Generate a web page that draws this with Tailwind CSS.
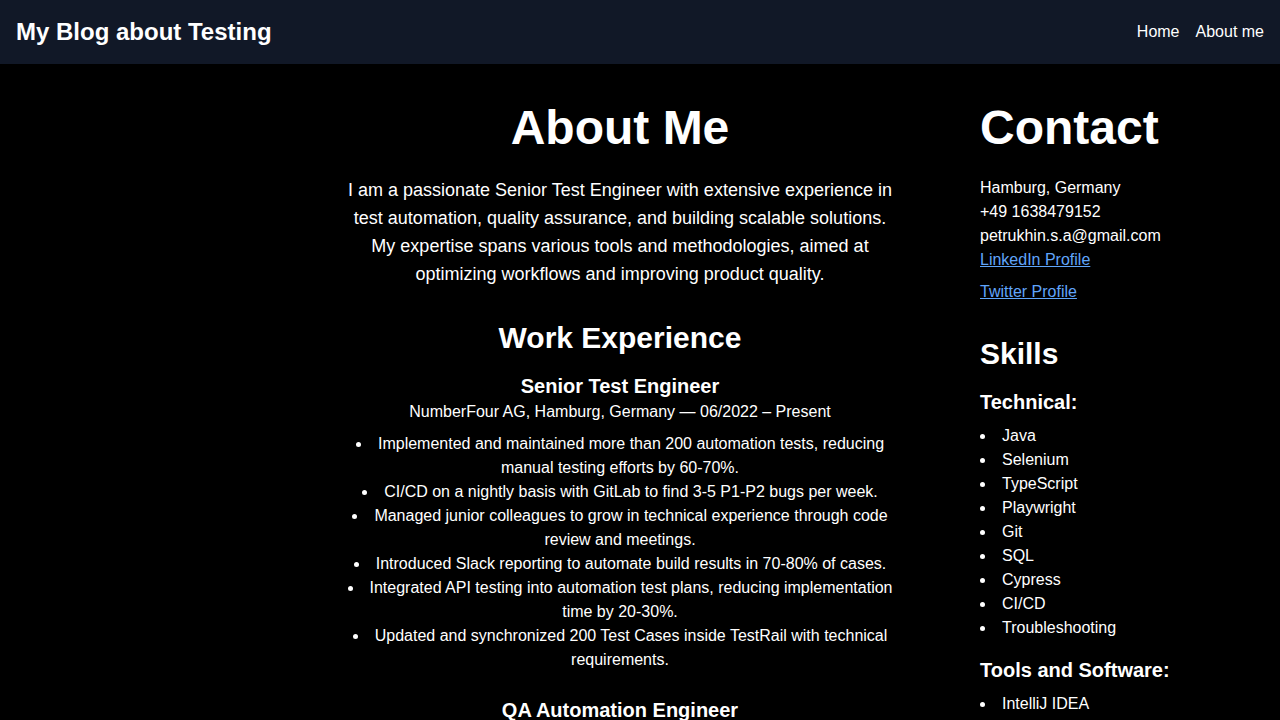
<!DOCTYPE html>
<html lang="en">
<head>
<meta charset="utf-8">
<meta name="viewport" content="width=device-width, initial-scale=1">
<title>My Blog about Testing</title>
<script src="https://cdn.jsdelivr.net/npm/@tailwindcss/browser@4"></script>
</head>
<body class="min-h-screen bg-black text-white font-['Liberation_Sans',Arial,sans-serif]">
<header class="bg-[#111827] p-4">
  <div class="flex items-center justify-between">
    <a href="#" class="text-2xl font-bold">My Blog about Testing</a>
    <nav class="flex gap-4">
      <a href="#">Home</a>
      <a href="#">About me</a>
    </nav>
  </div>
</header>
<div class="flex justify-end gap-10 px-5 py-8">
  <main class="w-full max-w-[600px] px-5 text-center">
    <h1 class="mb-4 text-5xl leading-[64px] font-bold">About Me</h1>
    <p class="mb-8 text-lg leading-7">I am a passionate Senior Test Engineer with extensive experience in test automation, quality assurance, and building scalable solutions. My expertise spans various tools and methodologies, aimed at optimizing workflows and improving product quality.</p>
    <h2 class="mb-4 text-3xl font-bold">Work Experience</h2>
    <section class="mb-6">
      <h3 class="text-xl font-bold">Senior Test Engineer</h3>
      <p>NumberFour AG, Hamburg, Germany — 06/2022 – Present</p>
      <ul class="mt-2 list-inside list-disc">
        <li>Implemented and maintained more than 200 automation tests, reducing manual testing efforts by 60-70%.</li>
        <li>CI/CD on a nightly basis with GitLab to find 3-5 P1-P2 bugs per week.</li>
        <li>Managed junior colleagues to grow in technical experience through code review and meetings.</li>
        <li>Introduced Slack reporting to automate build results in 70-80% of cases.</li>
        <li>Integrated API testing into automation test plans, reducing implementation time by 20-30%.</li>
        <li>Updated and synchronized 200 Test Cases inside TestRail with technical requirements.</li>
      </ul>
    </section>
    <section>
      <h3 class="text-xl font-bold">QA Automation Engineer</h3>
    </section>
  </main>
  <aside class="w-[300px] shrink-0 px-5">
    <h2 class="mb-4 text-5xl leading-[64px] font-bold">Contact</h2>
    <address class="mb-8 not-italic">
      <p>Hamburg, Germany</p>
      <p>+49 1638479152</p>
      <p>petrukhin.s.a@gmail.com</p>
      <p class="mb-2"><a href="#" class="text-[#60a5fa] underline">LinkedIn Profile</a></p>
      <p><a href="#" class="text-[#60a5fa] underline">Twitter Profile</a></p>
    </address>
    <h2 class="mb-4 text-3xl font-bold">Skills</h2>
    <h3 class="mb-2 text-xl font-bold">Technical:</h3>
    <ul class="mb-4 list-inside list-disc">
      <li>Java</li>
      <li>Selenium</li>
      <li>TypeScript</li>
      <li>Playwright</li>
      <li>Git</li>
      <li>SQL</li>
      <li>Cypress</li>
      <li>CI/CD</li>
      <li>Troubleshooting</li>
    </ul>
    <h3 class="mb-2 text-xl font-bold">Tools and Software:</h3>
    <ul class="list-inside list-disc">
      <li>IntelliJ IDEA</li>
    </ul>
  </aside>
</div>
</body>
</html>
